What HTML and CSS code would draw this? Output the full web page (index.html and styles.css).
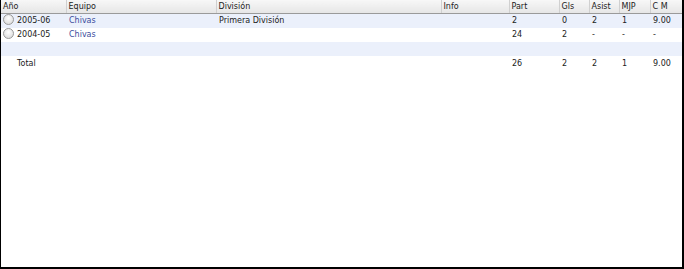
FILE: index.html
```html
<!DOCTYPE html>
<html>
<head>
<meta charset="utf-8">
<link rel="stylesheet" href="styles.css">
</head>
<body>
<div class="frame">
  <table class="stats">
    <colgroup>
      <col class="c-year"><col class="c-team"><col class="c-div"><col class="c-info">
      <col class="c-part"><col class="c-gls"><col class="c-asist"><col class="c-mjp"><col class="c-cm">
    </colgroup>
    <thead>
      <tr>
        <th>Año</th><th>Equipo</th><th>División</th><th>Info</th>
        <th>Part</th><th>Gls</th><th>Asist</th><th>MJP</th><th>C M</th>
      </tr>
    </thead>
    <tbody>
      <tr class="alt">
        <td><span class="radio"></span>2005-06</td>
        <td><a class="link" href="#">Chivas</a></td>
        <td>Primera División</td><td></td>
        <td>2</td><td>0</td><td>2</td><td>1</td><td>9.00</td>
      </tr>
      <tr>
        <td><span class="radio"></span>2004-05</td>
        <td><a class="link" href="#">Chivas</a></td>
        <td></td><td></td>
        <td>24</td><td>2</td><td>-</td><td>-</td><td>-</td>
      </tr>
      <tr class="alt empty">
        <td></td><td></td><td></td><td></td><td></td><td></td><td></td><td></td><td></td>
      </tr>
      <tr class="total">
        <td class="indent">Total</td><td></td><td></td><td></td>
        <td>26</td><td>2</td><td>2</td><td>1</td><td>9.00</td>
      </tr>
    </tbody>
  </table>
</div>
</body>
</html>
```

FILE: styles.css
```css
html, body {
  margin: 0;
  padding: 0;
  background: #fff;
}
.frame {
  width: 684px;
  height: 269px;
  box-sizing: border-box;
  border-left: 1px solid #000;
  border-right: 2px solid #000;
  border-bottom: 2px solid #000;
  background: #fff;
  font-family: "DejaVu Sans", Verdana, sans-serif;
  font-size: 8px;
  color: #222;
}
.stats {
  width: 681px;
  border-collapse: collapse;
  table-layout: fixed;
}
.c-year { width: 65px; }
.c-team { width: 150px; }
.c-div { width: 225px; }
.c-info { width: 68px; }
.c-part { width: 50px; }
.c-gls { width: 30px; }
.c-asist { width: 30px; }
.c-mjp { width: 31px; }
.c-cm { width: 32px; }
.stats th {
  height: 13px;
  padding: 0 0 0 2px;
  text-align: left;
  font-weight: normal;
  color: #222;
  background: linear-gradient(#f7f7f7, #e6e6e6);
  border-left: 1px solid #d0d0d0;
  border-bottom: 1px solid #9a9a9a;
  line-height: 12px;
  vertical-align: middle;
}
.stats th:first-child {
  border-left: none;
}
.stats td {
  height: 14px;
  padding: 0 0 0 3px;
  line-height: 14px;
  vertical-align: middle;
  white-space: nowrap;
}
.stats tr.alt td {
  background: #ebf0fb;
}
.stats td:first-child {
  padding-left: 2px;
}
.radio {
  display: inline-block;
  width: 9px;
  height: 9px;
  border: 1px solid #9a9a9a;
  border-radius: 50%;
  background: radial-gradient(circle at 50% 35%, #ffffff, #d4d4d4);
  vertical-align: -2px;
  margin-right: 3px;
  box-sizing: content-box;
}
.link {
  color: #3b4c9c;
  text-decoration: none;
}
.stats td.indent {
  padding-left: 16px;
}
.total td {
  height: 15px;
}
```
